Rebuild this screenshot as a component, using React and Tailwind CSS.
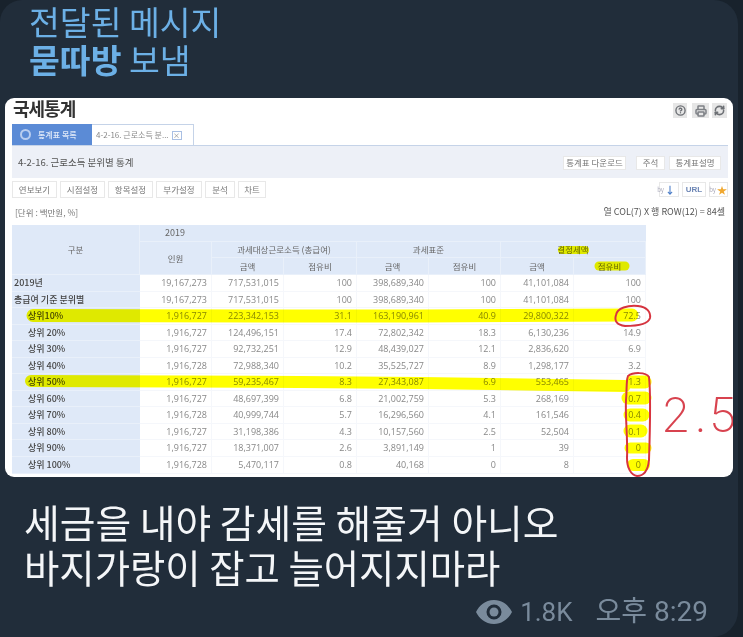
import React from 'react';
import { CircleHelp, Printer, RefreshCw } from 'lucide-react';

const KR = "font-['Noto_Sans_CJK_KR','Noto_Sans',sans-serif]";

const rows = [
    ['2019년', '19,167,273', '717,531,015', '100', '398,689,340', '100', '41,101,084', '100'],
    ['총급여 기준 분위별', '19,167,273', '717,531,015', '100', '398,689,340', '100', '41,101,084', '100'],
    ['상위10%', '1,916,727', '223,342,153', '31.1', '163,190,961', '40.9', '29,800,322', '72.5'],
    ['상위 20%', '1,916,727', '124,496,151', '17.4', '72,802,342', '18.3', '6,130,236', '14.9'],
    ['상위 30%', '1,916,727', '92,732,251', '12.9', '48,439,027', '12.1', '2,836,620', '6.9'],
    ['상위 40%', '1,916,728', '72,988,340', '10.2', '35,525,727', '8.9', '1,298,177', '3.2'],
    ['상위 50%', '1,916,727', '59,235,467', '8.3', '27,343,087', '6.9', '553,465', '1.3'],
    ['상위 60%', '1,916,727', '48,697,399', '6.8', '21,002,759', '5.3', '268,169', '0.7'],
    ['상위 70%', '1,916,728', '40,999,744', '5.7', '16,296,560', '4.1', '161,546', '0.4'],
    ['상위 80%', '1,916,727', '31,198,386', '4.3', '10,157,560', '2.5', '52,504', '0.1'],
    ['상위 90%', '1,916,727', '18,371,007', '2.6', '3,891,149', '1', '39', '0'],
    ['상위 100%', '1,916,728', '5,470,117', '0.8', '40,168', '0', '8', '0'],
];

const Head = ({ className = '', children }) => (
    <div className={`flex items-center justify-center bg-[#dfe9f8] border-r border-b border-[#e9f0fa] text-[8.5px] text-[#666] ${className}`}>
        {children}
    </div>
);

const SmallBtn = ({ className = '', children }) => (
    <div className={`flex items-center justify-center border border-[#e8e8e8] bg-white text-[8.5px] text-[#777] ${className}`}>
        {children}
    </div>
);

const StatsTable = () => (
    <div className="ml-[7px] grid w-[634px] grid-cols-[128px_72px_72px_73px_72px_72px_73px_72px] grid-rows-[17px_16px_17px] auto-rows-[16.55px]">
        <Head className="row-span-3">구분</Head>
        <div className="col-span-7 flex items-center bg-[#dfe9f8] border-b border-[#e9f0fa] pl-[25px] text-[9px] text-[#666]">2019</div>
        <Head className="row-span-2">인원</Head>
        <Head className="col-span-2">과세대상근로소득 (총급여)</Head>
        <Head className="col-span-2">과세표준</Head>
        <Head className="col-span-2">결정세액</Head>
        {['금액', '점유비', '금액', '점유비', '금액', '점유비'].map((h, i) => (
            <Head key={i}>{h}</Head>
        ))}
        {rows.map((row, i) => (
            <React.Fragment key={row[0]}>
                <div className={`flex items-center bg-[#dfe9f8] border-b border-[#e9f0fa] text-[9px] font-medium text-[#444] ${i < 2 ? 'pl-[2px]' : 'pl-[16px]'}`}>
                    {row[0]}
                </div>
                {row.slice(1).map((v, j) => (
                    <div key={j} className="flex items-center justify-end border-r border-b border-[#f5f7fb] pr-[4px] font-['Open_Sans',sans-serif] text-[9px] text-[#888]">
                        {v}
                    </div>
                ))}
            </React.Fragment>
        ))}
    </div>
);

// highlighter and pen marks drawn on top of the capture, in page coordinates
const Marks = () => (
    <svg viewBox="5 98 728 379" className="pointer-events-none absolute inset-0 h-full w-full mix-blend-multiply" fill="none">
        <g stroke="#ffff00" strokeLinecap="round">
            <path d="M33 315.5 L300 316 L420 316 L632 315" strokeWidth="13" />
            <path d="M31 381 L300 382 L420 383 L625 386" strokeWidth="12" />
            <path d="M562 250 H585" strokeWidth="8" />
            <path d="M599 266 H625" strokeWidth="9" />
            <path d="M632 382 H645" strokeWidth="13" />
            <path d="M628 398 H645" strokeWidth="13" />
            <path d="M630 415 H643" strokeWidth="13" />
            <path d="M630 431 H641" strokeWidth="13" />
            <path d="M630 448 H646" strokeWidth="11" />
            <path d="M633 465 H644" strokeWidth="12" />
        </g>
        <g stroke="#d8343f" strokeWidth="2" strokeLinecap="round">
            <path d="M616 315 C617 308 628 305 638 306 C647 307 651 312 650 318 C648 325 635 326 625 326 C617 325 614 321 616 315 Z" />
            <path d="M628 376 C633 372 646 372 649 377 C651 395 650 430 649 460 C648 470 644 476 637 476 C631 475 627 468 627 458 C628 440 625 415 626 400 C627 390 626 381 628 376 Z" />
        </g>
    </svg>
);

const ReportShot = () => (
    <div className={`relative mx-[5px] h-[379px] w-[728px] overflow-hidden rounded-[9px] bg-white ${KR}`}>
        <div className="blur-[0.5px]">
            {/* Title */}
            <div className="flex h-[26px] items-start justify-between pl-[8px] pr-[6px]">
                <span className="text-[18px] font-bold leading-[21px] tracking-[-1px] text-[#333]">국세통계</span>
                <div className="mt-[5px] flex gap-[3px]">
                    <div className="mr-[2px] flex h-[15px] w-[14px] items-center justify-center bg-[#e6e6e6]">
                        <CircleHelp size={11} strokeWidth={3} className="text-[#6d7075]" />
                    </div>
                    <div className="flex h-[15px] w-[17px] items-center justify-center bg-[#e6e6e6]">
                        <Printer size={12} strokeWidth={3} className="text-[#7d8085]" />
                    </div>
                    <div className="flex h-[15px] w-[15px] items-center justify-center bg-[#e6e6e6]">
                        <RefreshCw size={11} strokeWidth={3.5} className="text-[#6d7075]" />
                    </div>
                </div>
            </div>
            {/* Tabs */}
            <div className="ml-[7px] mr-[5px] flex h-[22px] border-b border-[#c5d3e8]">
                <div className="flex w-[80px] items-center gap-[7px] bg-[#5b8bd6] pl-[8px] text-[8px] font-medium text-[#dfe8f8]">
                    <div className="h-[11px] w-[11px] rounded-full border-2 border-[#b9cdef]" />
                    통계표 목록
                </div>
                <div className="flex w-[102px] items-center gap-[3px] border-r border-t border-[#c5d3e8] pl-[4px] text-[8px] text-[#888]">
                    <span>4-2-16. 근로소득 분...</span>
                    <div className="flex h-[9px] w-[10px] items-center justify-center border border-[#a9bfe3] text-[7px] leading-none">×</div>
                </div>
            </div>
            {/* Grey band */}
            <div className="ml-[7px] mr-[5px] flex h-[32px] items-center justify-between bg-[#edf0f7] pl-[6px] pr-[7px] pt-[1px]">
                <span className="text-[9.5px] text-[#555]">4-2-16. 근로소득 분위별 통계</span>
                <div className="flex items-center gap-[4px]">
                    <SmallBtn className="mr-[6px] h-[14px] w-[63px]">통계표 다운로드</SmallBtn>
                    <SmallBtn className="h-[14px] w-[29px]">주석</SmallBtn>
                    <SmallBtn className="h-[14px] w-[52px]">통계표설명</SmallBtn>
                </div>
            </div>
            {/* Toolbar */}
            <div className="ml-[7px] mr-[5px] mt-[3px] flex items-center justify-between">
                <div className="flex gap-[3px]">
                    <SmallBtn className="h-[17px] w-[45px]">연보보기</SmallBtn>
                    <SmallBtn className="h-[17px] w-[45px]">시점설정</SmallBtn>
                    <SmallBtn className="h-[17px] w-[45px]">항목설정</SmallBtn>
                    <SmallBtn className="h-[17px] w-[46px]">부가설정</SmallBtn>
                    <SmallBtn className="h-[17px] w-[30px]">분석</SmallBtn>
                    <SmallBtn className="h-[17px] w-[28px]">차트</SmallBtn>
                </div>
                <div className="flex gap-[3px]">
                    <div className="flex h-[15px] w-[20px] items-center justify-end gap-[1px] border border-[#e8e8e8] pr-[3px] text-[10px] font-bold leading-none">
                        <span className="text-[6px] font-normal text-[#aab]">by</span>
                        <span className="text-[#4a7cc7]">↓</span>
                    </div>
                    <div className="flex h-[15px] w-[24px] items-center justify-center border border-[#e8e8e8] font-['Liberation_Sans',sans-serif] text-[8px] font-bold text-[#6d86b5]">URL</div>
                    <div className="flex h-[15px] w-[19px] items-center justify-end gap-[1px] border border-[#e8e8e8] text-[10px] leading-none text-[#f0a830]">
                        <span className="text-[6px] text-[#aab]">by</span>
                        <span>★</span>
                    </div>
                </div>
            </div>
            {/* Unit row */}
            <div className="ml-[10px] mr-[8px] mt-[7px] flex h-[14px] items-center justify-between">
                <span className="text-[8.5px] text-[#777]">[단위 : 백만원, %]</span>
                <span className="text-[9px] text-[#555]">열 COL(7) X 행 ROW(12) = 84셀</span>
            </div>
            <div className="mt-[6px]">
                <StatsTable />
            </div>
        </div>
        <Marks />
        <span className="absolute left-[656px] top-[293px] font-['Inter',sans-serif] text-[48px] font-extralight leading-none tracking-[3px] text-[#d8434f]">2.5</span>
    </div>
);

const App = () => (
    <div className="h-[637px] w-[743px] overflow-hidden bg-[#18222c]">
        <div className="h-[637px] w-[738px] rounded-tl-[22px] rounded-tr-[24px] rounded-br-[26px] bg-[#212d3a]">
            <div className={`h-[98px] pl-[29px] pt-[2px] text-[33.5px] leading-[38px] text-[#6cb0e6] ${KR}`}>
                <div>전달된 메시지</div>
                <div><span className="font-bold">묻따방</span> 보냄</div>
            </div>
            <ReportShot />
            <div className={`pl-[24px] pt-[22px] leading-[45px] text-[#f4f6f8] ${KR}`}>
                <div className="text-[38.8px]">세금을 내야 감세를 해줄거 아니오</div>
                <div className="text-[38.4px]">바지가랑이 잡고 늘어지지마라</div>
            </div>
            <div className="mt-[8px] flex items-center justify-end pr-[30px] font-['Roboto','Noto_Sans_CJK_KR',sans-serif] text-[#7a8b9c]">
                <svg width="36" height="24" viewBox="0 0 36 24" className="mr-[8px]">
                    <path fill="#7a8b9c" fillRule="evenodd" d="M18 0 C27 0 33 6 36 12 C33 18 27 24 18 24 C9 24 3 18 0 12 C3 6 9 0 18 0 Z M18 4.5 A7.5 7.5 0 1 0 18 19.5 A7.5 7.5 0 1 0 18 4.5 Z" />
                    <circle cx="18" cy="12" r="4.5" fill="#7a8b9c" />
                </svg>
                <span className="text-[26px] leading-[30px]">1.8K</span>
                <span className="ml-[23px] text-[28px] leading-[30px]">오후 8:29</span>
            </div>
        </div>
    </div>
);

export default App;
